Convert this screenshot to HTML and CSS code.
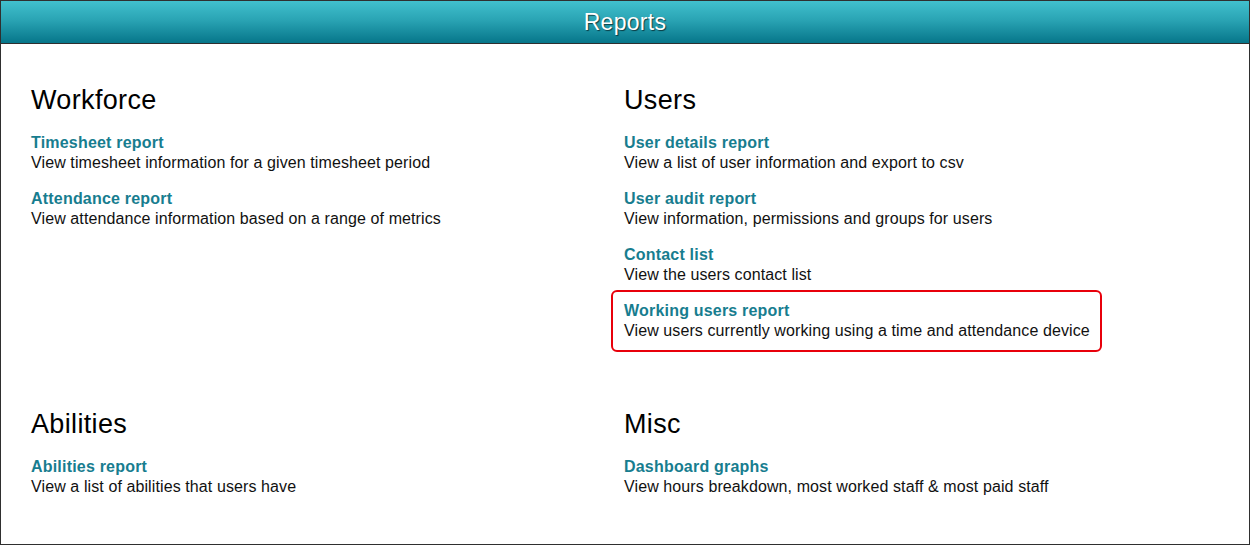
FILE: index.html
```html
<!DOCTYPE html>
<html lang="en">
<head>
    <meta charset="UTF-8">
    <title>Reports</title>
    <link rel="stylesheet" href="styles.css">
</head>
<body>
    <div class="reports-page">
        <div class="page-header">
            <h1 class="page-title">Reports</h1>
        </div>

        <div class="report-groups">
            <div class="report-group">
                <h2 class="group-title">Workforce</h2>
                <div class="report-item">
                    <a class="report-link" href="#">Timesheet report</a>
                    <p class="report-desc">View timesheet information for a given timesheet period</p>
                </div>
                <div class="report-item">
                    <a class="report-link" href="#">Attendance report</a>
                    <p class="report-desc">View attendance information based on a range of metrics</p>
                </div>
            </div>

            <div class="report-group">
                <h2 class="group-title">Users</h2>
                <div class="report-item">
                    <a class="report-link" href="#">User details report</a>
                    <p class="report-desc">View a list of user information and export to csv</p>
                </div>
                <div class="report-item">
                    <a class="report-link" href="#">User audit report</a>
                    <p class="report-desc">View information, permissions and groups for users</p>
                </div>
                <div class="report-item">
                    <a class="report-link" href="#">Contact list</a>
                    <p class="report-desc">View the users contact list</p>
                </div>
                <div class="report-item highlighted">
                    <a class="report-link" href="#">Working users report</a>
                    <p class="report-desc">View users currently working using a time and attendance device</p>
                </div>
            </div>

            <div class="report-group">
                <h2 class="group-title">Abilities</h2>
                <div class="report-item">
                    <a class="report-link" href="#">Abilities report</a>
                    <p class="report-desc">View a list of abilities that users have</p>
                </div>
            </div>

            <div class="report-group">
                <h2 class="group-title">Misc</h2>
                <div class="report-item">
                    <a class="report-link" href="#">Dashboard graphs</a>
                    <p class="report-desc">View hours breakdown, most worked staff &amp; most paid staff</p>
                </div>
            </div>
        </div>
    </div>
</body>
</html>
```

FILE: styles.css
```css
body, html {
    margin: 0;
    padding: 0;
    background: #FFFFFF;
    font-family: 'Liberation Sans', Arial, sans-serif;
}

.reports-page {
    box-sizing: border-box;
    width: 1250px;
    height: 545px;
    border: 1px solid #2F2F2F;
    background: #FFFFFF;
}

.page-header {
    height: 42px;
    border-bottom: 1px solid #2F2F2F;
    background: linear-gradient(to bottom, #41C0CD 0%, #2AA4B4 45%, #06768A 100%);
}

.page-title {
    margin: 0;
    font-size: 23px;
    font-weight: normal;
    line-height: 42px;
    letter-spacing: 0.3px;
    text-align: center;
    color: #FFFFFF;
    text-shadow: 1px 1px 1px rgba(0, 0, 0, 0.6);
}

.report-groups {
    display: grid;
    grid-template-columns: 593px 1fr;
    row-gap: 67px;
    padding: 40px 32px 0 30px;
}

.report-group {
    display: flex;
    flex-direction: column;
    gap: 16px;
}

.group-title {
    margin: 0 0 1px 0;
    font-size: 27px;
    font-weight: normal;
    line-height: 32px;
    letter-spacing: 0.35px;
    color: #000000;
}

.report-item {
    font-size: 16px;
    line-height: 20px;
    letter-spacing: 0.1px;
}

.report-item.highlighted {
    width: fit-content;
    margin: -11px 0 -11px -13px;
    padding: 9px 10px 9px 11px;
    border: 2px solid #E8000B;
    border-radius: 6px;
}

.report-link {
    display: block;
    font-weight: bold;
    letter-spacing: 0.2px;
    color: #177D8F;
    text-decoration: none;
}

.report-desc {
    margin: 0;
    color: #111111;
}
```
